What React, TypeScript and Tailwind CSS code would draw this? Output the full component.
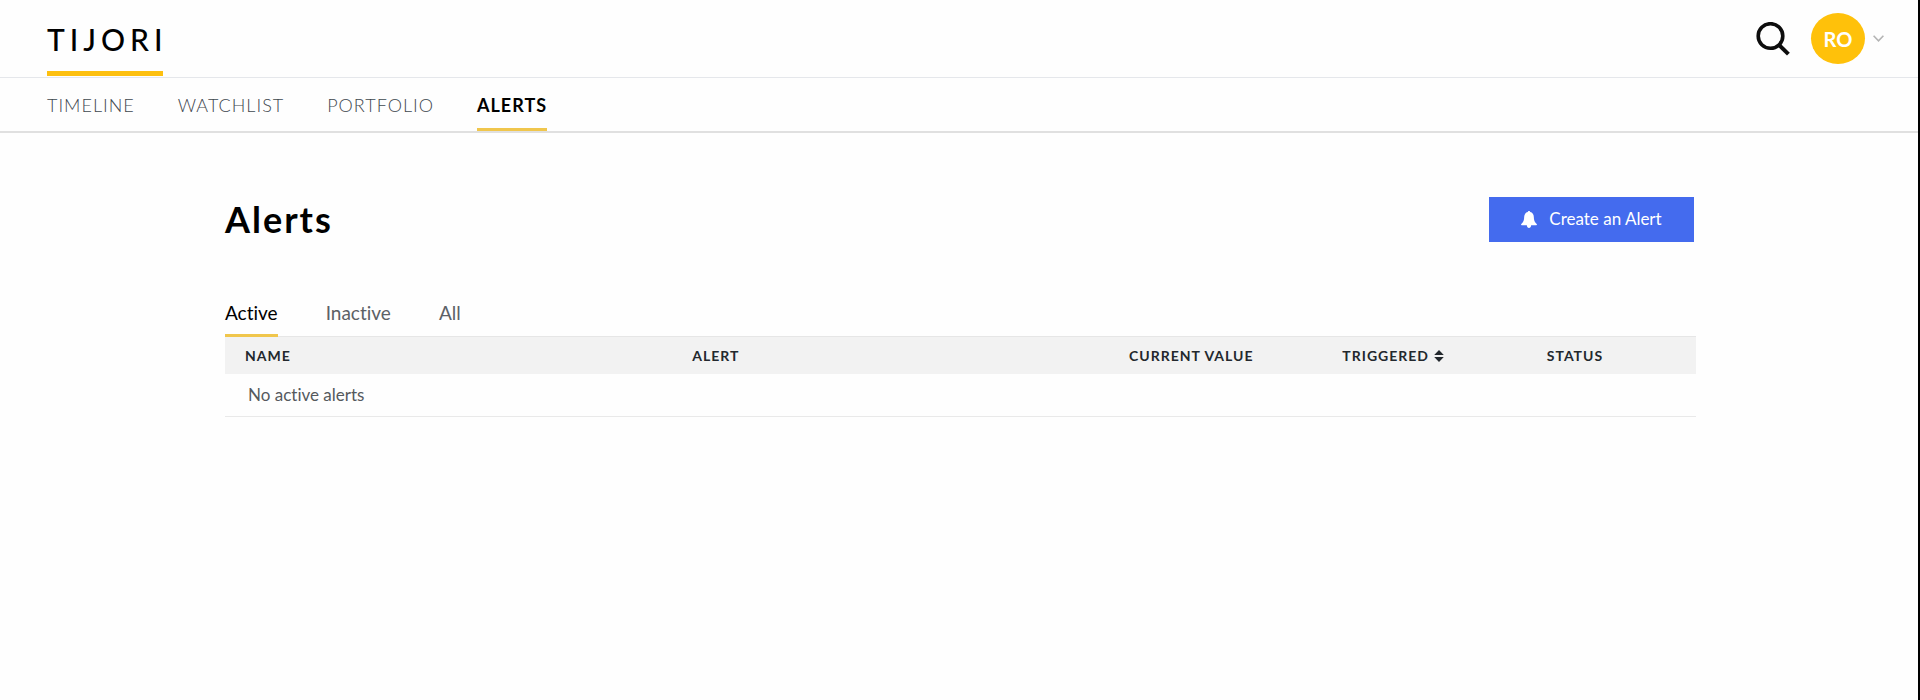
import React, { useState } from "react";
import clsx from "clsx";

const navLinks = ["Timeline", "Watchlist", "Portfolio", "Alerts"];
const tabs = ["Active", "Inactive", "All"];

function Header() {
  return (
    <header className="flex h-[78px] items-start justify-between border-b border-gray-200 pl-[47px] pr-[34px]">
      <a
        href="#"
        className="flex h-[76px] items-end border-b-[5px] border-[#fdc010] pb-4 text-[30px] font-medium leading-[32px] tracking-[5px] text-black"
      >
        <span className="-mr-[5px]">TIJORI</span>
      </a>
      <div className="flex h-[77px] items-center">
        <button aria-label="Search" className="mr-[21px]">
          <svg width="34" height="34" viewBox="0 0 34 34" fill="none" stroke="#0d0d0d">
            <circle cx="14.5" cy="14" r="12.3" strokeWidth="3.6" />
            <path d="M23 22.8 32.400 32.2" strokeWidth="4" />
          </svg>
        </button>
        <button aria-label="Account" className="flex items-center gap-2">
          <span className="flex h-[51px] w-[54px] items-center justify-center rounded-[50%] bg-[#ffc10a] text-[20px] font-bold text-white">
            RO
          </span>
          <svg width="11" height="7" viewBox="0 0 11 7" fill="none" stroke="#b4b4b4" strokeWidth="1.6">
            <path d="m.6.8 4.900 5 4.900-5" />
          </svg>
        </button>
      </div>
    </header>
  );
}

function Nav() {
  return (
    <nav className="flex h-[55px] gap-[43px] border-b-2 border-[#e0e0e0] pl-[47px] text-[18px] uppercase leading-6 tracking-[1px]">
      {navLinks.map((link) => (
        <a
          key={link}
          href="#"
          className={clsx(
            "h-[53px] border-b-[3px] pt-[15px]",
            link === "Alerts"
              ? "border-[#f0c64c] font-bold text-black"
              : "border-transparent font-light text-[#3f484f]"
          )}
        >
          {link}
        </a>
      ))}
    </nav>
  );
}

function BellIcon() {
  return (
    <svg width="16" height="17" viewBox="0 0 16 17" fill="#fff">
      <path d="M8 0c.7 0 1.200.5 1.200 1.100 2.300.5 3.500 2.400 3.600 4.700.1 3.400.7 5.200 2.900 7.200.5.500.2 1.200-.5 1.200H.8c-.7 0-1-.7-.5-1.200C2.500 11 3.100 9.200 3.200 5.800 3.300 3.500 4.500 1.600 6.800 1.100 6.800.5 7.300 0 8 0zM5.800 14h4.400c-.1 1.800-1 3-2.200 3s-2.100-1.200-2.200-3z" />
    </svg>
  );
}

function SortIcon() {
  return (
    <svg width="10" height="12" viewBox="0 0 10 12" fill="#23282d" className="ml-[5px] inline-block align-[-1px]">
      <path d="M5 0 9.800 5H.2zM5 12 .2 7h9.600z" />
    </svg>
  );
}

function AlertsTable({ tab }: { tab: string }) {
  return (
    <table className="w-full table-fixed border-b border-[#e9e9e9] text-left">
      <thead>
        <tr className="h-[37px] bg-[#f2f2f2] text-[14px] uppercase leading-5 tracking-[1px] text-[#23282d]">
          <th className="w-[30.4%] pl-5">Name</th>
          <th className="w-[29.7%] pl-5">Alert</th>
          <th className="w-[14.5%] pl-5">Current Value</th>
          <th className="w-[13.9%] pl-5">
            <button className="font-bold uppercase tracking-[1px]">
              Triggered
              <SortIcon />
            </button>
          </th>
          <th className="pl-5">Status</th>
        </tr>
      </thead>
      <tbody>
        <tr className="h-[42px] text-[17px] leading-6 text-[#55595d]">
          <td colSpan={5} className="pl-[23px]">
            No {tab === "All" ? "" : tab.toLowerCase() + " "}alerts
          </td>
        </tr>
      </tbody>
    </table>
  );
}

function App() {
  const [tab, setTab] = useState("Active");

  return (
    <div className="min-h-screen border-r-2 border-black bg-[#fefefe] font-['Lato',sans-serif] [font-variant-ligatures:none]">
      <Header />
      <Nav />
      <main className="pl-[225px] pr-[222px] pt-[62px]">
        <div className="flex items-center justify-between">
          <h1 className="text-[36px] font-bold leading-[48px] tracking-[2px] text-black">Alerts</h1>
          <button className="mr-[2px] flex h-[45px] w-[205px] items-center justify-center gap-3 bg-[#446bee] text-[17px] text-white">
            <BellIcon />
            Create an Alert
          </button>
        </div>
        <div className="mt-[58px] flex gap-12 border-b border-[#e6e6e6] text-[19px] leading-6">
          {tabs.map((name) => (
            <button
              key={name}
              onClick={() => setTab(name)}
              className={clsx(
                "-mb-px border-b-[3px] pb-[9px]",
                name === tab ? "border-[#f0c64c] text-black" : "border-transparent text-[#5c6166]"
              )}
            >
              {name}
            </button>
          ))}
        </div>
        <AlertsTable tab={tab} />
      </main>
    </div>
  );
}

export default App;
